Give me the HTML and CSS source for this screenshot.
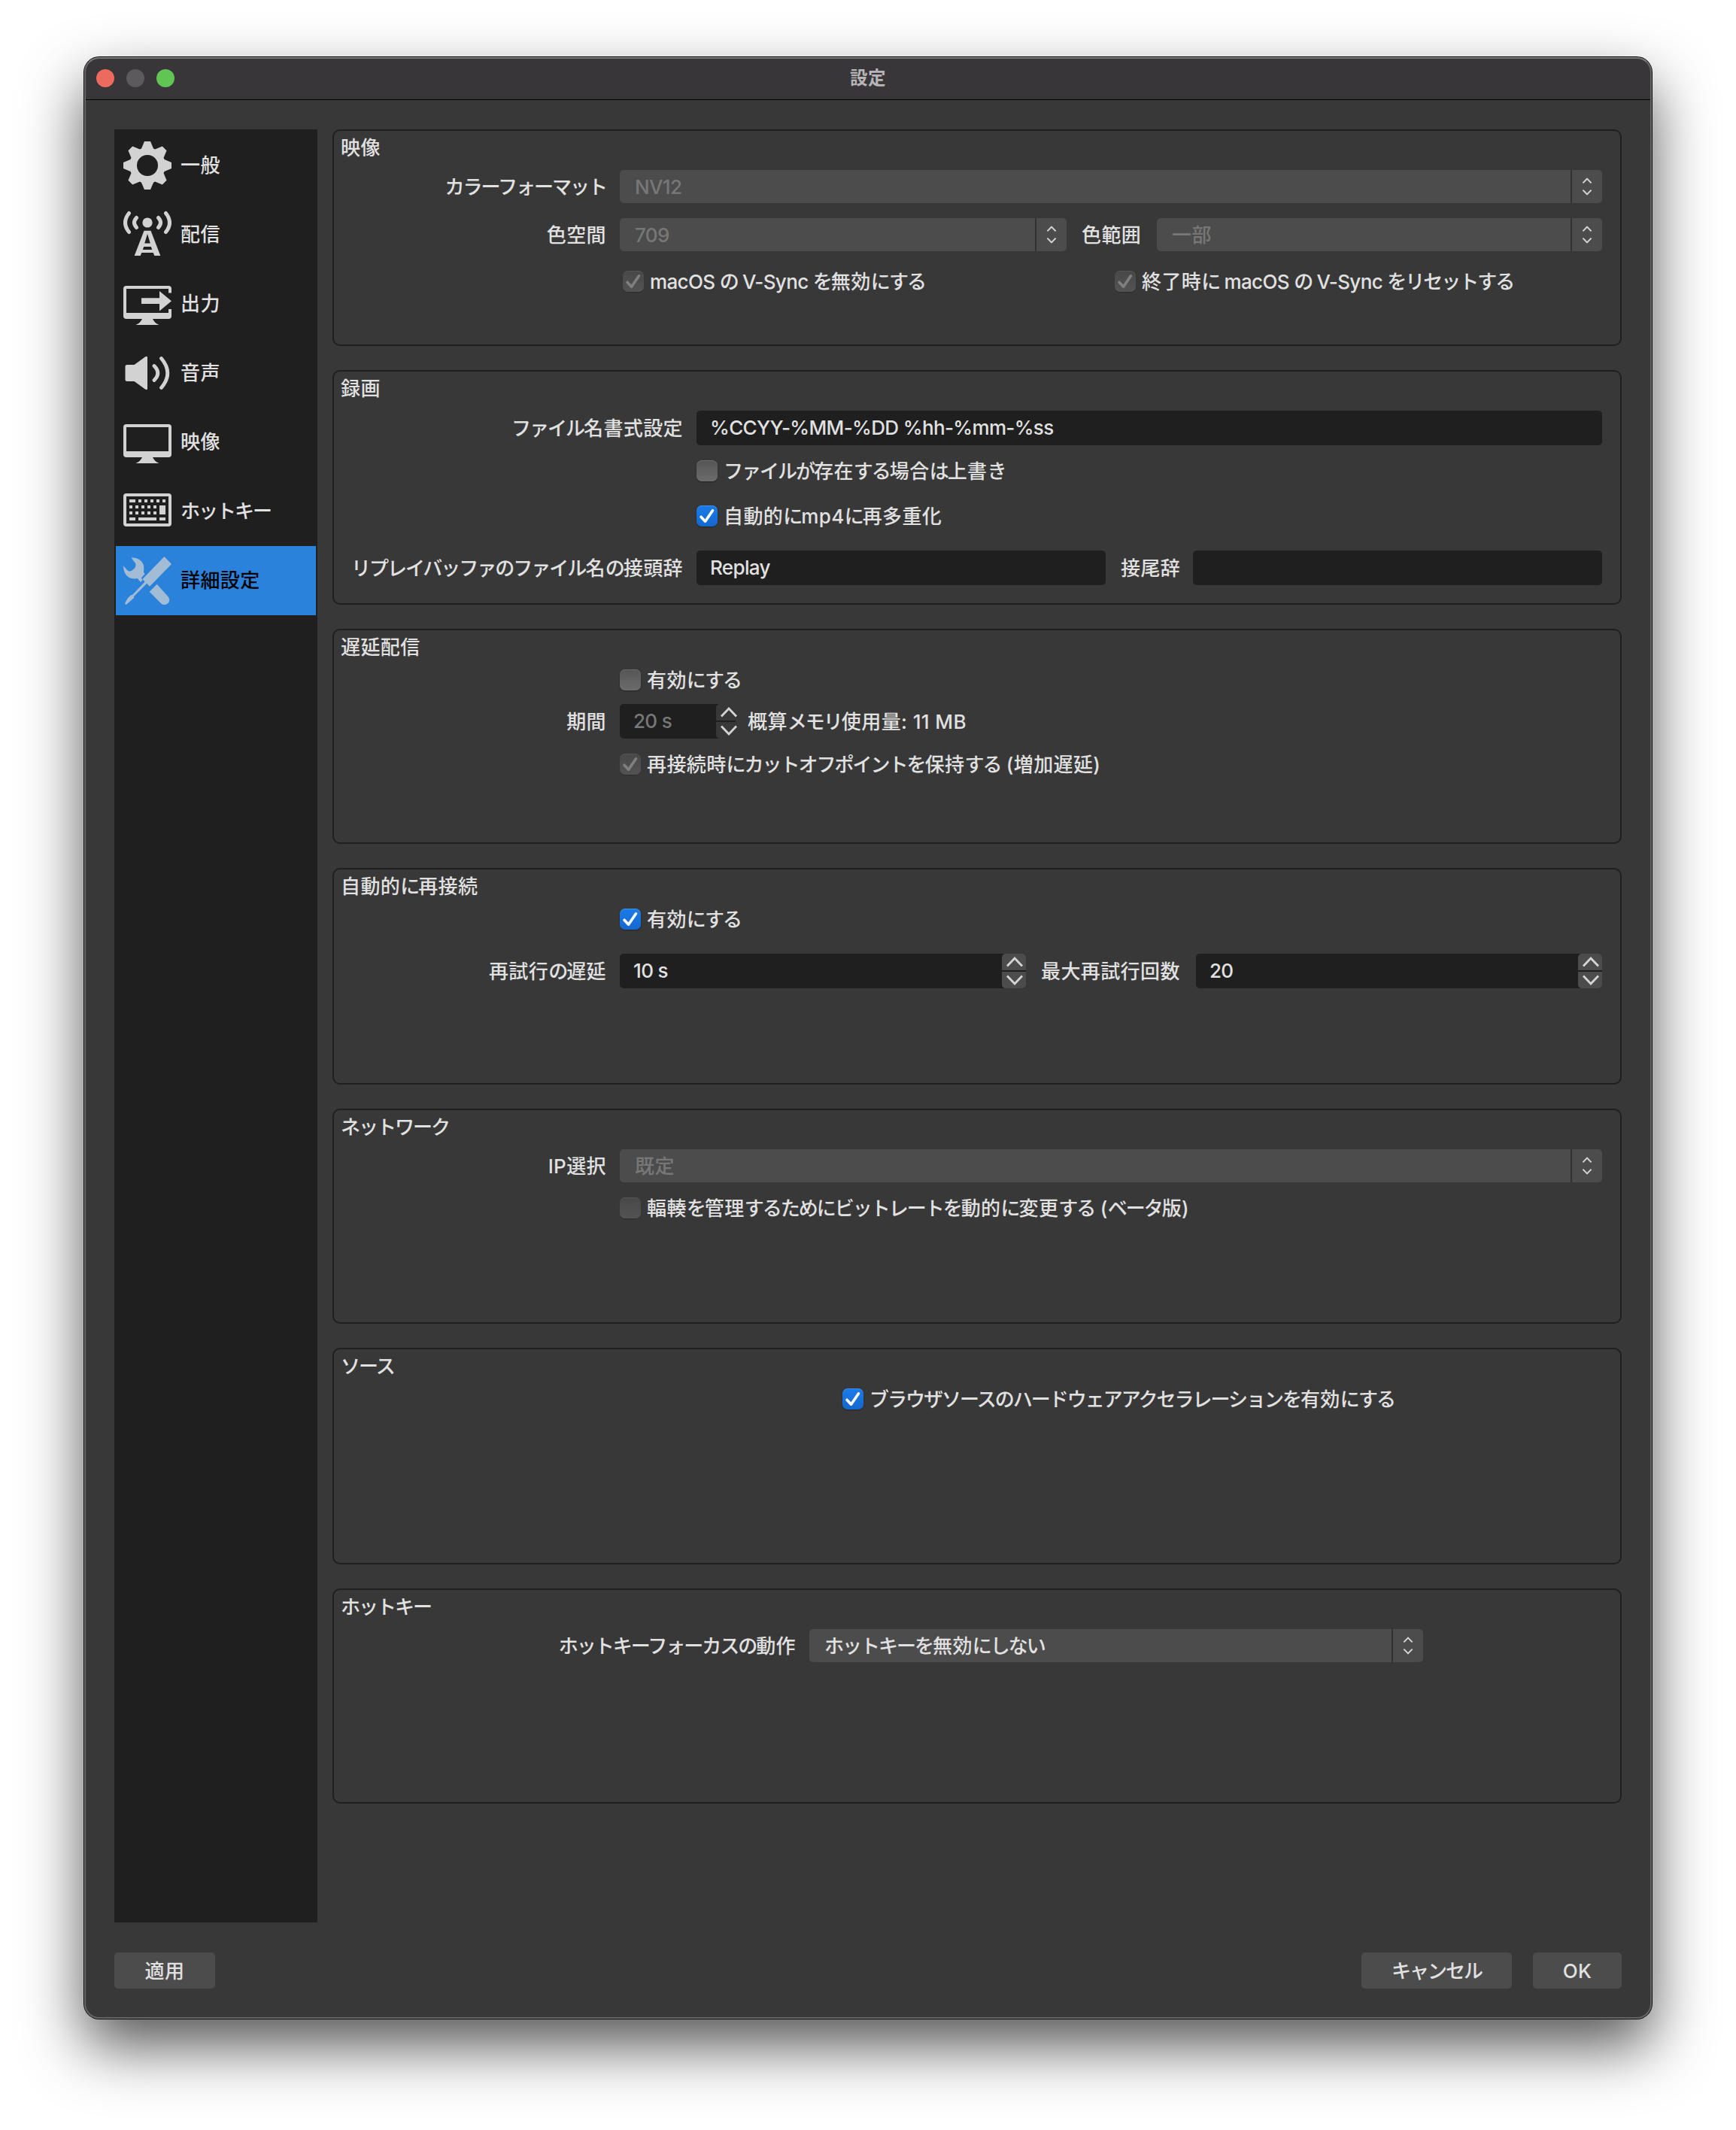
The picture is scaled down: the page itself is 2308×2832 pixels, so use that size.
FILE: index.html
```html
<!DOCTYPE html>
<html lang="ja">
<head>
<meta charset="utf-8">
<title>設定</title>
<link rel="stylesheet" href="styles.css">
</head>
<body>
<svg class="defs" width="0" height="0" aria-hidden="true">
  <symbol id="updown" viewBox="0 0 14 24"><path d="M1.4 7.4 7 1.6l5.6 5.8M1.4 16.6 7 22.4l5.6-5.8" fill="none" stroke="#d4d4d4" stroke-width="2"/></symbol>
  <symbol id="up" viewBox="0 0 24 14"><path d="M2 12.5 12 2l10 10.500" fill="none" stroke="#d4d4d4" stroke-width="2.8"/></symbol>
  <symbol id="down" viewBox="0 0 24 14"><path d="M2 1.500 12 12 22 1.500" fill="none" stroke="#d4d4d4" stroke-width="2.800"/></symbol>
  <symbol id="tick" viewBox="0 0 28 28"><path d="M6 15.200 11.600 21.200 21.500 6.800" fill="none" stroke="currentColor" stroke-width="3.600" stroke-linecap="round" stroke-linejoin="round"/></symbol>
</svg>
<div class="window">
  <header class="titlebar">
    <div class="lights"><i class="light red"></i><i class="light gray"></i><i class="light green"></i></div>
    <h1>設定</h1>
  </header>
  <div class="body">
    <nav class="sidebar">
      <div class="item"><svg viewBox="0 0 8 8"><path fill-rule="evenodd" d="M3.5 0l-.5 1.190c-.1.030-.19.080-.28.130l-1.190-.5-.72.720.5 1.190c-.05.100-.09.180-.13.280l-1.190.5v1l1.190.5c.04.100.08.180.13.280l-.5 1.190.72.720 1.190-.5c.09.040.18.090.28.130l.5 1.190h1l.5-1.190c.09-.04.19-.08.28-.13l1.190.5.72-.72-.5-1.190c.04-.09.09-.19.13-.28l1.190-.5v-1l-1.190-.5c-.03-.09-.08-.19-.13-.28l.5-1.190-.72-.72-1.190.5c-.09-.04-.19-.09-.28-.13l-.5-1.190zM4 2.250a1.750 1.750 0 1 1 0 3.500a1.750 1.750 0 0 1 0-3.500z"/></svg><span>一般</span></div>
      <div class="item"><svg viewBox="0 0 64 64"><circle cx="32" cy="16" r="6.600"/><g fill="none" stroke="#d2d2d2" stroke-width="5" stroke-linecap="round"><path d="M17.500 9.500Q11.500 16 17.500 22.500M46.500 9.500Q52.500 16 46.500 22.500M7.500 3.500Q-2.500 16 7.500 28.500M56.500 3.500Q66.500 16 56.500 28.500"/></g><path fill-rule="evenodd" d="M27.500 26.700h9L49.300 60h-8l-1.600-4H24.300l-1.600 4h-8zM32 31l-3.800 12.500h7.600zM27.200 48l-1.400 4h12.400l-1.400-4z"/></svg><span>配信</span></div>
      <div class="item"><svg viewBox="0 0 64 64"><path d="M4 8h56a4 4 0 0 1 4 4v5.500h-4V12H4v32h56v-5h4v9a4 4 0 0 1-4 4H39q2 5 8.500 8h-31q6.500-3 8.500-8H4a4 4 0 0 1-4-4V12a4 4 0 0 1 4-4zM24 24.300h24V15l16 13.200-16 13.200V32H24z"/></svg><span>出力</span></div>
      <div class="item"><svg viewBox="0 0 64 64"><path d="M5 21h9.500L29 10.600q3-2 3 1v40.800q0 3-3 1L14.500 43H5q-2.500 0-2.500-2.500v-17Q2.500 21 5 21z"/><path d="M41 22.500Q50.500 32 41 41.500M50.500 12.500Q67 32 50.500 51.500" fill="none" stroke="#d2d2d2" stroke-width="4.800" stroke-linecap="round"/></svg><span>音声</span></div>
      <div class="item"><svg viewBox="0 0 64 64"><path fill-rule="evenodd" d="M4 8h56a4 4 0 0 1 4 4v36a4 4 0 0 1-4 4H39q2 5 8.500 8h-31q6.500-3 8.500-8H4a4 4 0 0 1-4-4V12a4 4 0 0 1 4-4zM4 12v32h56V12z"/></svg><span>映像</span></div>
      <div class="item"><svg viewBox="0 0 64 64"><path fill-rule="evenodd" d="M4 8h56a4 4 0 0 1 4 4v36a4 4 0 0 1-4 4H4a4 4 0 0 1-4-4V12a4 4 0 0 1 4-4zM4 12v36h56V12z"/><path d="M8 16h8v4H8zM20 16h4v4h-4zM28 16h4v4h-4zM36 16h4v4h-4zM44 16h4v4h-4zM52 16h4v4h-4zM8 24h4v4H8zM16 24h4v4h-4zM24 24h4v4h-4zM32 24h4v4h-4zM40 24h4v4h-4zM48 24h8v12h-8zM8 32h4v4H8zM16 32h4v4h-4zM24 32h4v4h-4zM32 32h4v4h-4zM40 32h4v4h-4zM8 40h8v4H8zM20 40h24v4H20zM48 40h8v4h-8z"/></svg><span><span class="kana">ホットキー</span></span></div>
      <div class="item selected"><svg viewBox="0 0 64 64"><path d="M54.400 0 64 10 35 39.700 31.200 35.800 14.200 52.800 14 55 10.600 58 3.800 64 2 62.600 5.300 56 9.600 51.600 12.200 50.800 28.600 33.400 25.400 30zM10.600 1.700C19 .5 27.500 6.500 27.400 15L27 20.500 28.400 23.200 23.800 28.400 25.600 31 22.900 34 18.700 29C10 31 0 26.500 0 12.300L5.600 18.600Q8 20.500 11.500 18.600L15 15.500Q17 13 16.200 9zM34.700 46.700 44.600 36.700 59.500 53.200C65 61 56 66.500 50.500 62.700z"/></svg><span>詳細設定</span></div>
    </nav>
    <main class="groups">
      <section class="group h288">
        <h2>映像</h2>
        <div class="row tall">
          <label class="label"><span class="kana">カラーフォーマット</span></label>
          <div class="combo grow off"><span class="latin">NV12</span><b><svg><use href="#updown"/></svg></b></div>
        </div>
        <div class="row tall mt20">
          <label class="label">色空間</label>
          <div class="combo w594 off"><span class="latin">709</span><b><svg><use href="#updown"/></svg></b></div>
          <label class="mid range">色範囲</label>
          <div class="combo grow off"><span>一部</span><b><svg><use href="#updown"/></svg></b></div>
        </div>
        <div class="row mt26 vsync">
          <div class="check dim"><i><svg><use href="#tick"/></svg></i><span><span class="latin">macOS </span><span class="kana">の</span><span class="latin"> V-Sync </span><span class="kana">を</span>無効<span class="kana">にする</span></span></div>
          <div class="check dim"><i><svg><use href="#tick"/></svg></i><span>終了時<span class="kana">に</span><span class="latin"> macOS </span><span class="kana">の</span><span class="latin"> V-Sync </span><span class="kana">をリセットする</span></span></div>
        </div>
      </section>

      <section class="group h312 wide">
        <h2>録画</h2>
        <div class="row field">
          <label class="label"><span class="kana">ファイル</span>名書式設定</label>
          <div class="input grow latin">%CCYY-%MM-%DD %hh-%mm-%ss</div>
        </div>
        <div class="row mt20 indent"><div class="check"><i></i><span><span class="kana">ファイルが</span>存在<span class="kana">する</span>場合<span class="kana">は</span>上書<span class="kana">き</span></span></div></div>
        <div class="row mt32 indent"><div class="check on"><i><svg><use href="#tick"/></svg></i><span>自動的<span class="kana">に</span>mp4<span class="kana">に</span>再多重化</span></div></div>
        <div class="row field mt32">
          <label class="label"><span class="kana">リプレイバッファのファイル</span>名<span class="kana">の</span>接頭辞</label>
          <div class="input w544 latin">Replay</div>
          <label class="mid suffix">接尾辞</label>
          <div class="input grow"></div>
        </div>
      </section>

      <section class="group">
        <h2>遅延配信</h2>
        <div class="row indent"><div class="check"><i></i><span>有効<span class="kana">にする</span></span></div></div>
        <div class="row field mt18">
          <label class="label">期間</label>
          <div class="spin w160 off"><span class="latin">20 s</span><div class="steps"><b><svg><use href="#up"/></svg></b><b><svg><use href="#down"/></svg></b></div></div>
          <label class="mid memory">概算<span class="kana">メモリ</span>使用量: 11 MB</label>
        </div>
        <div class="row mt20 indent"><div class="check dim"><i><svg><use href="#tick"/></svg></i><span>再接続時<span class="kana">にカットオフポイントを</span>保持<span class="kana">する</span> (増加遅延)</span></div></div>
      </section>

      <section class="group h288">
        <h2>自動的<span class="kana">に</span>再接続</h2>
        <div class="row indent"><div class="check on"><i><svg><use href="#tick"/></svg></i><span>有効<span class="kana">にする</span></span></div></div>
        <div class="row field mt32">
          <label class="label">再試行<span class="kana">の</span>遅延</label>
          <div class="spin w540"><span class="latin">10 s</span><div class="steps"><b><svg><use href="#up"/></svg></b><b><svg><use href="#down"/></svg></b></div></div>
          <label class="mid retries">最大再試行回数</label>
          <div class="spin grow"><span class="latin">20</span><div class="steps"><b><svg><use href="#up"/></svg></b><b><svg><use href="#down"/></svg></b></div></div>
        </div>
      </section>

      <section class="group">
        <h2><span class="kana">ネットワーク</span></h2>
        <div class="row tall">
          <label class="label">IP選択</label>
          <div class="combo grow off"><span>既定</span><b><svg><use href="#updown"/></svg></b></div>
        </div>
        <div class="row mt20 indent"><div class="check empty"><i></i><span>輻輳<span class="kana">を</span>管理<span class="kana">するためにビットレートを</span>動的<span class="kana">に</span>変更<span class="kana">する</span> (<span class="kana">ベータ</span>版)</span></div></div>
      </section>

      <section class="group h288">
        <h2><span class="kana">ソース</span></h2>
        <div class="row browser"><div class="check on"><i><svg><use href="#tick"/></svg></i><span><span class="kana">ブラウザソースのハードウェアアクセラレーションを</span>有効<span class="kana">にする</span></span></div></div>
      </section>

      <section class="group focus">
        <h2><span class="kana">ホットキー</span></h2>
        <div class="row tall">
          <label class="label"><span class="kana">ホットキーフォーカスの</span>動作</label>
          <div class="combo w816"><span><span class="kana">ホットキーを</span>無効<span class="kana">にしない</span></span><b><svg><use href="#updown"/></svg></b></div>
        </div>
      </section>
    </main>
  </div>
  <footer class="actions">
    <button class="apply">適用</button>
    <button class="cancel"><span class="kana">キャンセル</span></button>
    <button class="ok">OK</button>
  </footer>
</div>
</body>
</html>
```
FILE: styles.css
```css
* { box-sizing: border-box; }
html { background: #fff; }
body {
  margin: 0;
  width: 2308px;
  height: 2832px;
  padding: 76px 112px 0;
  overflow: hidden;
  background: #fff;
  color: #e1e1e1;
  font: 450 26px/30px Inter, "Noto Sans CJK JP", sans-serif;
  letter-spacing: 0.4px;
}
h1, h2 { margin: 0; font-weight: inherit; }
.defs { position: absolute; }
.kana { letter-spacing: -2px; }
.latin { letter-spacing: -0.65px; }

/* Window frame */
.window {
  position: relative;
  display: flex;
  flex-direction: column;
  width: 2084px;
  height: 2608px;
  border-radius: 20px;
  background: #383838;
  box-shadow: 0 0 0 1px #0c0c0c, 0 36px 80px rgba(0, 0, 0, .67);
}
.window::after {
  content: "";
  position: absolute;
  inset: 0;
  border: 2px solid #666;
  border-top-color: #7a7a7a;
  border-radius: 20px;
  pointer-events: none;
}
.titlebar {
  display: grid;
  grid-template-columns: 1fr auto 1fr;
  align-items: center;
  height: 57px;
  padding-left: 16px;
  border-bottom: 1px solid #000;
  border-radius: 20px 20px 0 0;
  background: #393639;
}
.titlebar h1 {
  color: #b7b5b7;
  font-size: 23.5px;
  font-weight: 700;
  line-height: 30px;
  margin-left: -16px;
}
.lights { display: flex; gap: 16px; }
.light { width: 24px; height: 24px; border-radius: 50%; }
.red { background: #ec6a5e; }
.gray { background: #5c5a5d; }
.green { background: #61c554; }

.body {
  display: flex;
  gap: 20px;
  height: 2384px;
  margin: 39px 40px 0;
}

/* Sidebar */
.sidebar { width: 270px; padding: 2px; background: #1f1f1f; }
.item {
  display: flex;
  align-items: center;
  gap: 12px;
  height: 92px;
  padding-left: 10px;
}
.item svg { width: 64px; height: 64px; fill: #d2d2d2; flex: none; }
.selected { background: #2a82da; color: #000; font-weight: 500; }
.selected svg { fill: #a2bcd6; }

/* Setting groups */
.groups { flex: 1; display: flex; flex-direction: column; gap: 32px; }
.group {
  --label: 352px;
  height: 286px;
  padding: 8px 24px 0 9px;
  border: 2px solid #1f1f1f;
  border-radius: 10px;
  white-space: nowrap;
}
.h288 { height: 288px; }
.h312 { height: 312px; }
.wide { --label: 454px; }
.focus { --label: 604px; }
.group h2 { font-size: 26px; line-height: 30px; margin-bottom: 14px; }
.row { display: flex; align-items: center; height: 28px; padding-left: 1px; }
.tall { height: 44px; }
.field { height: 46px; }
.mt18 { margin-top: 18px; }
.mt20 { margin-top: 20px; }
.mt26 { margin-top: 26px; }
.mt32 { margin-top: 32px; }
.indent { padding-left: calc(var(--label) + 19px); }
.browser { padding-left: 667px; }
.vsync { padding-left: 375px; }
.vsync .check:first-child { width: 654px; }
.label, .mid, .combo > span, .check > span { padding-top: 2px; }
.label { width: var(--label); margin-right: 18px; text-align: right; flex: none; }
.grow { flex: 1; }
.mid { flex: none; }
.range { width: 120px; padding-left: 20px; }
.suffix { width: 116px; padding-left: 20px; }
.retries { width: 226px; padding-left: 20px; }
.memory { padding-left: 10px; }
.w160 { width: 160px; }
.w540 { width: 540px; }
.w544 { width: 544px; }
.w594 { width: 594px; }
.w816 { width: 816px; }

.combo {
  display: flex;
  align-items: center;
  height: 44px;
  padding-left: 20px;
  border-radius: 5px;
  background: #4c4c4c;
}
.combo > span { flex: 1; }
.combo b {
  display: flex;
  align-items: center;
  justify-content: center;
  width: 42px;
  height: 44px;
  border-left: 2px solid #323232;
}
.combo svg { width: 14px; height: 24px; }
.off > span { color: #777; }

.input {
  height: 46px;
  padding: 8px 18px;
  border-radius: 5px;
  background: #1f1f1f;
}
.spin {
  display: flex;
  height: 46px;
  padding-left: 18px;
  border-radius: 5px;
  background: #1f1f1f;
}
.spin > span { flex: 1; line-height: 45px; }
.steps { display: flex; flex-direction: column; gap: 2px; width: 32px; }
.steps b {
  display: flex;
  align-items: center;
  justify-content: center;
  height: 22px;
  padding-left: 2px;
  background: #4c4c4c;
}
.steps b:first-child { border-radius: 5px 5px 0 0; }
.steps b:last-child { border-radius: 0 0 5px 5px; }
.steps svg { width: 24px; height: 14px; }
.spin.off { background: linear-gradient(to right, #1f1f1f 130px, #383838 130px); }
.spin.off .steps { background: linear-gradient(to right, #1f1f1f 26px, #383838 26px); }
.spin.off .steps b { background: #383838; }

.check { display: flex; align-items: center; gap: 8px; }
.check i {
  width: 28px;
  height: 28px;
  border-radius: 7px;
  background: linear-gradient(#555, #6c6c6c);
  box-shadow: 0 1px 2px rgba(0, 0, 0, .35), inset 0 1px 0 rgba(255, 255, 255, .14);
}
.check svg { display: block; width: 28px; height: 28px; }
.check.on i { background: linear-gradient(#1b7ce8, #1467cf); color: #fff; }
.check.dim i, .check.empty i { background: linear-gradient(#484848, #535353); color: #7f7f7f; box-shadow: 0 1px 1px rgba(0, 0, 0, .2), inset 0 1px 0 rgba(255, 255, 255, .07); }

/* Dialog buttons */
.actions { display: flex; margin: 40px 40px 0; }
.actions button {
  height: 48px;
  padding: 2px 0 0;
  border: 0;
  border-radius: 5px;
  background: #4c4c4c;
  color: inherit;
  font: inherit;
  letter-spacing: inherit;
}
.apply { width: 134px; }
.actions .cancel { width: 200px; margin-left: auto; margin-right: 28px; }
.ok { width: 118px; }
```
